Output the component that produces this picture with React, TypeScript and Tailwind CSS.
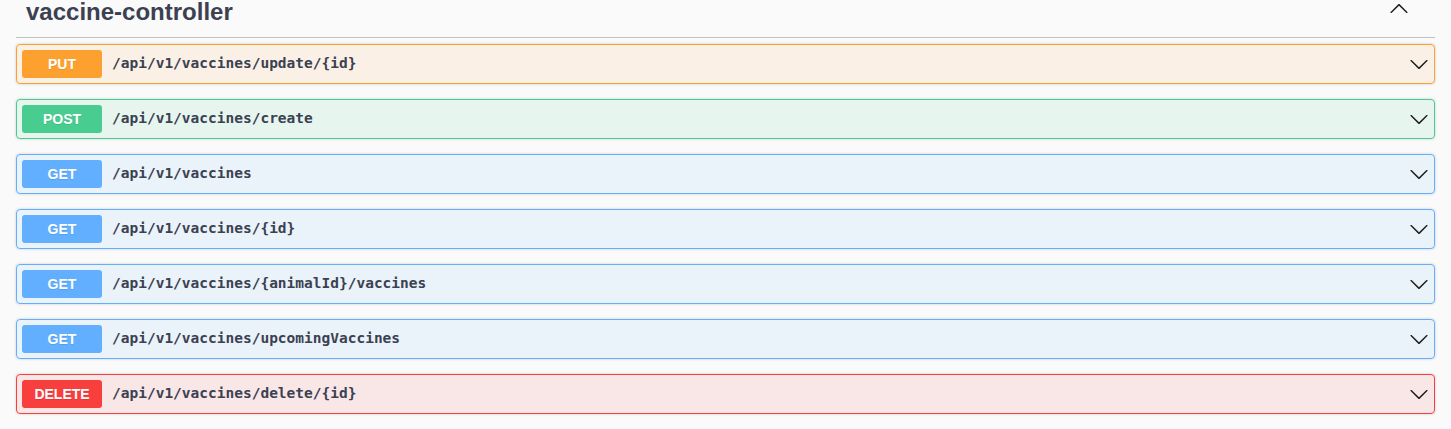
const endpoints = [
    { method: 'PUT', path: '/api/v1/vaccines/update/{id}' },
    { method: 'POST', path: '/api/v1/vaccines/create' },
    { method: 'GET', path: '/api/v1/vaccines' },
    { method: 'GET', path: '/api/v1/vaccines/{id}' },
    { method: 'GET', path: '/api/v1/vaccines/{animalId}/vaccines' },
    { method: 'GET', path: '/api/v1/vaccines/upcomingVaccines' },
    { method: 'DELETE', path: '/api/v1/vaccines/delete/{id}' },
];

const styles: Record<string, { block: string; badge: string }> = {
    PUT: { block: 'border-[#fca130] bg-[rgba(252,161,48,0.1)]', badge: 'bg-[#fca130]' },
    POST: { block: 'border-[#49cc90] bg-[rgba(73,204,144,0.1)]', badge: 'bg-[#49cc90]' },
    GET: { block: 'border-[#61affe] bg-[rgba(97,175,254,0.1)]', badge: 'bg-[#61affe]' },
    DELETE: { block: 'border-[#f93e3e] bg-[rgba(249,62,62,0.1)]', badge: 'bg-[#f93e3e]' },
};

function Arrow({ up = false }: { up?: boolean }) {
    return (
        <svg width="20" height="20" viewBox="0 0 20 20" className={up ? 'rotate-180' : ''} fill="#1f1f1f">
            <path d="M17.418 6.109c.272-.268.709-.268.979 0s.271.701 0 .969l-7.908 7.83c-.27.268-.707.268-.979 0l-7.908-7.83c-.27-.268-.27-.701 0-.969.271-.268.709-.268.979 0L10 13.25l7.418-7.141z" />
        </svg>
    );
}

export default function App() {
    return (
        <div className="min-h-[429px] bg-[#fafafa] px-4 text-[#3b4151]">
            <div className="mb-[6px] flex items-start border-b border-[rgba(59,65,81,0.3)] pb-[13px]">
                <h3 className="flex-1 pl-[10px] font-['Liberation_Sans',Arial,sans-serif] text-[24px] font-bold leading-[24px]">
                    vaccine-controller
                </h3>
                <div className="mr-[26px] -mt-[1px]">
                    <Arrow up />
                </div>
            </div>
            {endpoints.map((e, i) => (
                <div
                    key={i}
                    className={`mb-[15px] rounded border shadow-[0_0_3px_rgba(0,0,0,0.19)] ${styles[e.method].block}`}
                >
                    <div className="flex items-center p-[5px]">
                        <span
                            className={`min-w-[80px] rounded-[3px] py-[6px] text-center font-['Liberation_Sans',Arial,sans-serif] text-[14px] font-bold leading-[16px] text-white [text-shadow:0_1px_0_rgba(0,0,0,0.1)] ${styles[e.method].badge}`}
                        >
                            {e.method}
                        </span>
                        <span className="flex-1 px-[10px] font-['DejaVu_Sans_Mono',monospace] text-[14.5px] font-bold">
                            {e.path}
                        </span>
                        <Arrow />
                    </div>
                </div>
            ))}
        </div>
    );
}
